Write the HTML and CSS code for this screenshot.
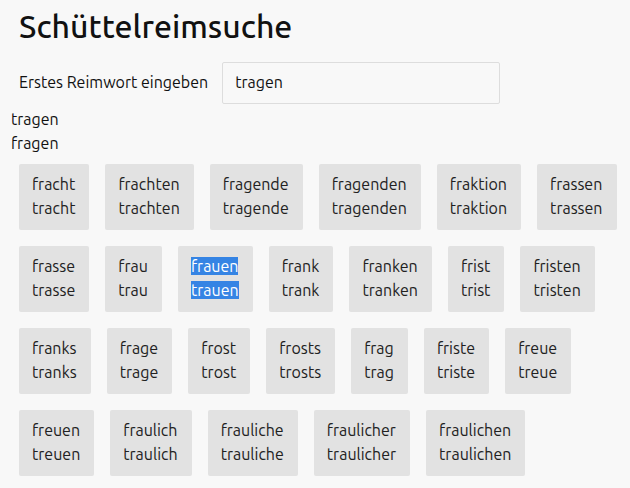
FILE: index.html
```html
<!DOCTYPE html>
<html lang="de">
<head>
<meta charset="utf-8">
<meta name="viewport" content="width=device-width, initial-scale=1">
<title>Schüttelreimsuche</title>
<link rel="stylesheet" href="styles.css">
</head>
<body>
<main>
  <h1>Schüttelreimsuche</h1>
  <form class="search">
    <label for="word">Erstes Reimwort eingeben</label>
    <input id="word" type="text" value="tragen">
  </form>
  <p class="current">tragen<br>fragen</p>
  <div class="rhymes">
    <button type="button">fracht<br>tracht</button>
    <button type="button">frachten<br>trachten</button>
    <button type="button">fragende<br>tragende</button>
    <button type="button">fragenden<br>tragenden</button>
    <button type="button">fraktion<br>traktion</button>
    <button type="button">frassen<br>trassen</button>
    <button type="button">frasse<br>trasse</button>
    <button type="button">frau<br>trau</button>
    <button type="button"><mark>frauen</mark><br><mark>trauen</mark></button>
    <button type="button">frank<br>trank</button>
    <button type="button">franken<br>tranken</button>
    <button type="button">frist<br>trist</button>
    <button type="button">fristen<br>tristen</button>
    <button type="button">franks<br>tranks</button>
    <button type="button">frage<br>trage</button>
    <button type="button">frost<br>trost</button>
    <button type="button">frosts<br>trosts</button>
    <button type="button">frag<br>trag</button>
    <button type="button">friste<br>triste</button>
    <button type="button">freue<br>treue</button>
    <button type="button">freuen<br>treuen</button>
    <button type="button">fraulich<br>traulich</button>
    <button type="button">frauliche<br>trauliche</button>
    <button type="button">fraulicher<br>traulicher</button>
    <button type="button">fraulichen<br>traulichen</button>
  </div>
</main>
</body>
</html>
```
FILE: styles.css
```css
* { box-sizing: border-box; }

body {
  margin: 0;
  padding: 3px 0 12px 11px;
  background: #f8f8f8;
  color: #111;
  font: 16px/24px Ubuntu, "Noto Sans", sans-serif;
}

h1 {
  margin: 0 8px 13px;
  font-size: 32px;
  font-weight: 550;
  line-height: 46px;
}

.search {
  display: flex;
  align-items: center;
  gap: 14px;
  margin: 0 8px 3px;
}

.search label { padding-bottom: 2px; }

.search input {
  width: 278px;
  padding: 7px 12px 9px;
  border: 1px solid #ddd;
  border-radius: 2px;
  background: #f8f8f8;
  color: #111;
  font: inherit;
}

.current { margin: 0; }

.rhymes {
  display: flex;
  flex-wrap: wrap;
  gap: 16px;
  padding: 9px 0 0 8px;
}

.rhymes button {
  padding: 8px 14px 10px 13px;
  border: 0;
  border-radius: 2px;
  background: #e2e2e2;
  color: #212121;
  font: inherit;
  text-align: left;
}

mark {
  background: #3584e4;
  color: #fff;
}
```
